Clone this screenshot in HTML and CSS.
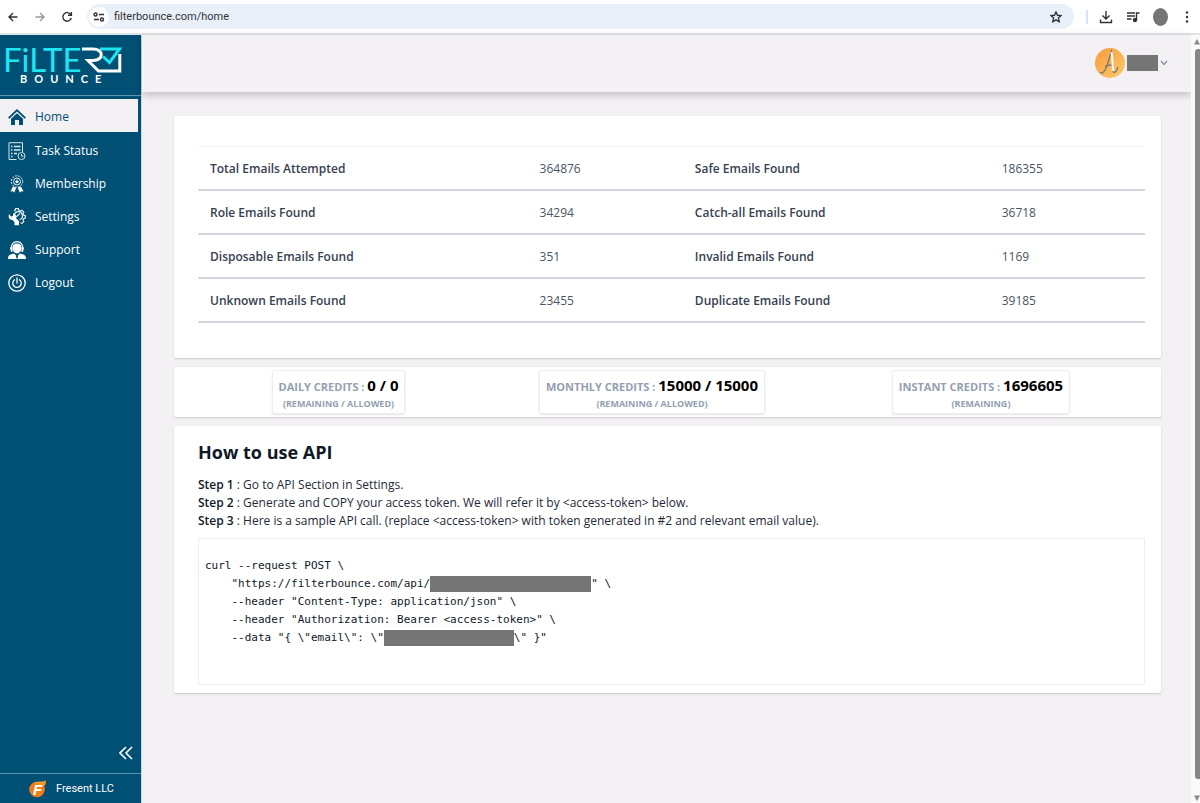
FILE: index.html
```
<!DOCTYPE html>
<html lang="en">
<head>
    <meta charset="utf-8">
    <meta name="viewport" content="width=device-width, initial-scale=1.0">
    <title>Filter Bounce</title>
    <link rel="stylesheet" href="styles.css">
</head>
<body>
<div class="window">
    <!-- browser bar -->
    <div class="browser">
        <button type="button" class="nav_btn" aria-label="Back"><svg width="10" height="10" viewBox="0 0 10 10"><path d="M9.5 5H1M5 1L1 5l4 4"/></svg></button>
        <button type="button" class="nav_btn off" aria-label="Forward"><svg width="10" height="10" viewBox="0 0 10 10"><path d="M.5 5H9M5 1l4 4-4 4"/></svg></button>
        <button type="button" class="nav_btn" aria-label="Reload"><svg width="12" height="12" viewBox="0 0 12 12"><path d="M9.8 3.6A4.3 4.3 0 1 0 10.300 7M10.400 1v3.300H7"/></svg></button>
        <div class="address">
            <span class="site_info"><svg width="12" height="10" viewBox="0 0 12 10"><circle cx="2.500" cy="2.500" r="1.500"/><path d="M6 2.500h5M1 7.500h5"/><circle cx="9" cy="7.500" r="1.500"/></svg></span>
            <input class="url" type="text" value="filterbounce.com/home" aria-label="Address">
            <button type="button" class="star" aria-label="Bookmark"><svg width="12" height="12" viewBox="0 0 12 12"><path d="M6 1l1.500 3.300 3.600.4-2.700 2.400.8 3.600L6 8.900l-3.200 1.800.8-3.600L.9 4.700l3.600-.4z"/></svg></button>
        </div>
        <span class="bar_line"></span>
        <button type="button" class="tool" aria-label="Downloads"><svg width="14" height="14" viewBox="0 0 14 14"><path d="M7 1v7.500M3.500 5.500L7 9l3.500-3.500M1.500 9.500v3h11v-3"/></svg></button>
        <button type="button" class="tool" aria-label="Media"><svg width="14" height="12" viewBox="0 0 14 12"><path d="M1 2h8M1 5h8M1 8h4.500M10.500 9V2h3"/><circle cx="9" cy="9" r="1.500" fill="#333"/></svg></button>
        <span class="profile"></span>
        <button type="button" class="tool dots" aria-label="Menu"><svg width="4" height="12" viewBox="0 0 4 12"><circle cx="2" cy="1.500" r="1.200"/><circle cx="2" cy="6" r="1.200"/><circle cx="2" cy="10.500" r="1.200"/></svg></button>
    </div>

    <div class="page">
        <!-- sidebar -->
        <aside class="sidebar">
            <a href="#" class="logo" aria-label="Filter Bounce">
                <svg width="120" height="46" viewBox="0 0 120 46">
                    <text class="logo_top" x="-2" y="28">FiLTE</text>
                    <path d="M77 5H88c11 0 11 11.500 0 11.500h-5L93.500 27h21.300V10" fill="none" stroke="#fff" stroke-width="3"/>
                    <path d="M95 5h19.500L104.500 18.500 98 12.500" fill="none" stroke="#1fe5f2" stroke-width="3"/>
                    <text class="logo_sub" x="15" y="39">BOUNCE</text>
                </svg>
            </a>
            <nav class="menu">
                <a href="#" class="item on">
                    <svg width="18" height="18" viewBox="0 0 18 18"><path d="M0 9.500L9 1l9 8.500-1.300 1.300L9 3.600l-7.700 7.200z" fill="#004f74"/><path d="M3 10.800l6-5.500 6 5.500V17h-4v-5H7v5H3z" fill="#004f74"/></svg>
                    Home</a>
                <a href="#" class="item">
                    <svg width="18" height="18" viewBox="0 0 18 18" fill="none" stroke="#d9e8ef"><path d="M8.500 17.500H1V.7h13.500V10"/><path d="M3 4.500h1.500M6 4.500h6.500M3 8h1.500M6 8h6.500M3 11.500h1.500M6 11.500h3M3 14.500h1.500" stroke-width="1.300"/><circle cx="13.500" cy="14" r="3.500"/><path d="M13.500 12v2.200h2"/></svg>
                    Task Status</a>
                <a href="#" class="item">
                    <svg width="18" height="18" viewBox="0 0 18 18" fill="none" stroke="#e6f0f5"><circle cx="9" cy="6.500" r="5.700" stroke-dasharray="2 1"/><circle cx="9" cy="6.500" r="3.500"/><path d="M9 4.300l.7 1.500 1.500.1-1.100 1 .4 1.500L9 7.700l-1.500.7.4-1.500-1.100-1 1.500-.1z" fill="#fff" stroke="none"/><path d="M5 11.500l-2.500 5 2.500-.3 1.200 1.500 2-5zM13 11.500l2.500 5-2.500-.3-1.200 1.500-2-5z" fill="#fff" stroke="none"/></svg>
                    Membership</a>
                <a href="#" class="item">
                    <svg width="18" height="18" viewBox="0 0 18 18" fill="none" stroke="#e6f0f5" stroke-width="1.200"><path d="M6 3l1-.5.6-1.800h2.800l.5 1.800 1.400.6 1.600-.9 1.900 2-.8 1.600.5 1.200 1.800.6v2.500l-1.800.6-.5 1.300.8 1.600-1.800 1.800-1.500-.7"/><path d="M6.500 8a4 4 0 1 1 5 3.500M8 9l4-3.500"/><path d="M1 6l2 2.500 2-.5V5.200c3 1 3.600 3 2.800 4.800l3.200 3v4.300H6.500v-3L4.500 12C1 12 0 9 1 6z" fill="#fff" stroke="none"/></svg>
                    Settings</a>
                <a href="#" class="item">
                    <svg width="18" height="18" viewBox="0 0 18 18"><path d="M3.200 8V6.500a5.800 5.800 0 0 1 11.600 0V8" fill="none" stroke="#fff" stroke-width="1.200"/><path d="M2 6.500h2.500V11H3zM13.500 6.500H16L15 11h-1.500z" fill="#fff"/><path d="M9 2.500c6 0 5 6 3 8.500-1.500 1.800-4.500 1.800-6 0-2-2.500-3-8.500 3-8.500z" fill="#fff"/><path d="M0 18c0-4 2-4.500 6-5.500l3 3 3-3c4 1 6 1.500 6 5.500z" fill="#fff"/><path d="M9 14.500l1.200 1.200L9 18l-1.200-2.300z" fill="#004f74"/></svg>
                    Support</a>
                <a href="#" class="item">
                    <svg width="18" height="18" viewBox="0 0 18 18" fill="none" stroke="#fff" stroke-width="1.300"><circle cx="9" cy="9" r="8.200"/><path d="M6.500 5.800a4.200 4.200 0 1 0 5 0M9 4v5" stroke-linecap="round"/></svg>
                    Logout</a>
            </nav>
            <button type="button" class="fold" aria-label="Collapse menu"><svg width="14" height="14" viewBox="0 0 14 14"><path d="M7 1L1 7l6 6M13 1L7 7l6 6" fill="none" stroke="#fff" stroke-width="1.600"/></svg></button>
            <a href="#" class="company">
                <svg width="18" height="18" viewBox="0 0 18 18"><circle cx="8" cy="9.500" r="7.800" fill="#ef7d1a"/><path d="M5 2.500C9 1 14 2 17 .5c0 4-1 5-3 6z" fill="#f6962c"/><text class="company_f" x="4" y="15">F</text></svg>
                Fresent LLC</a>
        </aside>

        <!-- contents -->
        <div class="contents">
            <header class="topbar">
                <button type="button" class="user" aria-label="Account">
                    <svg width="30" height="30" viewBox="0 0 30 30"><defs><linearGradient id="sun" x1="0" y1="0" x2="1" y2="1"><stop offset="0" stop-color="#f79a3e"/><stop offset="1" stop-color="#fdcb6a"/></linearGradient></defs><circle cx="15" cy="15" r="15" fill="url(#sun)"/><path d="M5 24c2 3 5-1 7-6 2-6 3-11 4.500-15 1.500 7 .5 15 1.500 20 .8 3 3.500 1 5-4M10 18.500c3-2 6-1.500 9-1" fill="none" stroke="#77727c" stroke-width="1.200"/><path d="M16.500 4c1.500 7 .5 14 2 19" fill="none" stroke="#fff" stroke-width="2"/></svg>
                    <span class="user_name"></span>
                    <svg width="8" height="6" viewBox="0 0 8 6"><path d="M1 1l3 3.500L7 1" fill="none" stroke="#7d8da3" stroke-width="1.200"/></svg>
                </button>
            </header>

            <main class="main">
                <section class="card stats">
                    <table class="tbl">
                        <tbody>
                            <tr><th>Total Emails Attempted</th><td>364876</td><th>Safe Emails Found</th><td>186355</td></tr>
                            <tr><th>Role Emails Found</th><td>34294</td><th>Catch-all Emails Found</th><td>36718</td></tr>
                            <tr><th>Disposable Emails Found</th><td>351</td><th>Invalid Emails Found</th><td>1169</td></tr>
                            <tr><th>Unknown Emails Found</th><td>23455</td><th>Duplicate Emails Found</th><td>39185</td></tr>
                        </tbody>
                    </table>
                </section>

                <section class="card credits">
                    <div class="cell">
                        <div class="credit"><p class="amount">DAILY CREDITS : <strong>0 / 0</strong></p><p class="note">(REMAINING / ALLOWED)</p></div>
                    </div>
                    <div class="cell">
                        <div class="credit"><p class="amount">MONTHLY CREDITS : <strong>15000 / 15000</strong></p><p class="note">(REMAINING / ALLOWED)</p></div>
                    </div>
                    <div class="cell">
                        <div class="credit"><p class="amount">INSTANT CREDITS : <strong>1696605</strong></p><p class="note">(REMAINING)</p></div>
                    </div>
                </section>

                <section class="card api">
                    <h2 class="tit">How to use API</h2>
                    <p class="step"><b>Step 1</b> : Go to API Section in Settings.</p>
                    <p class="step"><b>Step 2</b> : Generate and COPY your access token. We will refer it by &lt;access-token&gt; below.</p>
                    <p class="step"><b>Step 3</b> : Here is a sample API call. (replace &lt;access-token&gt; with token generated in #2 and relevant email value).</p>
                    <pre class="code">curl --request POST \
    "https://filterbounce.com/api/<span class="mask path"></span>" \
    --header "Content-Type: application/json" \
    --header "Authorization: Bearer &lt;access-token&gt;" \
    --data "{ \"email\": \"<span class="mask mail"></span>\" }"</pre>
                </section>
            </main>
        </div>

        <!-- scrollbar -->
        <div class="scroll">
            <svg width="6" height="6" viewBox="0 0 6 6"><path d="M0 5.500L3 0l3 5.500z" fill="#888"/></svg>
            <span class="thumb"></span>
            <svg width="6" height="6" viewBox="0 0 6 6"><path d="M0 .5L3 6 6 .5z" fill="#888"/></svg>
        </div>
    </div>
</div>
</body>
</html>
```
FILE: styles.css
```
*{padding: 0;margin: 0;box-sizing: border-box;}
body{font-family: "Open Sans", "Noto Sans", sans-serif;font-size: 12px;line-height: 18px;color: #1f2937;background-color: #f3f1f4;}
a{color: inherit;text-decoration: none;}
button{border: 0;background: none;font: inherit;color: inherit;display: flex;align-items: center;justify-content: center;}
svg{display: block;flex: none;}
.window{display: flex;flex-direction: column;height: 100vh;}

/* browser bar */
.browser{display: flex;align-items: center;height: 35px;padding: 0 8px 0 6px;background-color: #fff;border-bottom: 2px solid #e3e3e5;flex: none;}
.browser svg{fill: none;stroke: #333;stroke-width: 1.4;}
.nav_btn{width: 14px;height: 20px;margin-right: 13px;}
.nav_btn.off{opacity: .5;}
.address{display: flex;align-items: center;flex: 1;height: 25px;padding: 0 12px 0 2px;border-radius: 13px;background-color: #eaf0fa;}
.site_info{display: flex;align-items: center;justify-content: center;width: 20px;height: 20px;border-radius: 50%;background-color: #fff;}
.url{flex: 1;min-width: 0;margin-left: 5px;border: 0;background: none;font-family: Roboto, sans-serif;font-size: 11px;color: #333;outline: 0;}
.bar_line{width: 2px;height: 14px;margin: 0 11px 0 12px;background-color: #d3e3fd;}
.tool{width: 14px;height: 20px;margin-right: 13px;}
.profile{width: 15px;height: 18px;border-radius: 50%;background-color: #757575;}
.dots{width: 4px;margin: 0 3px 0 17px;}
.dots svg{fill: #333;stroke: none;}

/* layout */
.page{display: flex;flex: 1;min-height: 0;}
.contents{flex: 1;min-width: 0;display: flex;flex-direction: column;}

/* sidebar */
.sidebar{display: flex;flex-direction: column;width: 142px;background-color: #004f74;border-right: 1px solid #c9dbe5;color: #fff;flex: none;}
.logo{height: 61px;padding: 9px 5px 0;border-bottom: 1px solid #5e93ad;}
.logo svg{overflow: visible;}
.logo_top{font-family: Lato, sans-serif;font-size: 33px;fill: #1fe5f2;}
.logo_sub{font-family: Lato, sans-serif;font-size: 11px;font-weight: 700;letter-spacing: 7px;fill: #fff;}
.menu{display: flex;flex-direction: column;flex: 1;padding: 3px 3px 0 0;}
.item{display: flex;align-items: center;gap: 9px;height: 33px;padding: 2px 0 0 8px;font-size: 12px;font-weight: 500;}
.item.on{margin-bottom: 1px;background-color: #f3f1f4;color: #004f74;}
.fold{align-self: flex-end;width: 30px;height: 40px;}
.company{display: flex;align-items: center;gap: 9px;height: 30px;padding-left: 29px;border-top: 1px solid #5e93ad;font-family: Roboto, sans-serif;font-size: 11px;}
.company_f{font-family: "Liberation Sans", sans-serif;font-size: 15px;font-weight: bold;font-style: italic;fill: #fff;}

/* top */
.topbar{display: flex;align-items: center;justify-content: flex-end;height: 57px;padding: 0 23px 2px 0;background-color: #f3f1f4;box-shadow: 0 3px 8px rgba(0,0,0,.22);flex: none;}
.user{gap: 2px;}
.user_name{width: 31px;height: 16px;background-color: #757575;}

/* cards */
.main{display: flex;flex-direction: column;gap: 9px;padding: 24px 30px 24px 32px;}
.card{background-color: #fff;border-radius: 2px;box-shadow: 0 1px 2px rgba(0,0,0,.16);}
.stats{padding: 30px 16px 35px 24px;}
.tbl{width: 100%;table-layout: fixed;border-spacing: 0;border-top: 1px solid #f3f3f5;}
.tbl th, .tbl td{height: 44px;padding: 1px 12px 0;border-bottom: 2px solid #d0d6dd;text-align: left;color: #4b5563;font-weight: 400;}
.tbl th{width: 34.8%;color: #374151;font-weight: 600;}
.tbl th:nth-child(3){width: 32.4%;}

.credits{display: grid;grid-template-columns: 329fr 298fr 360fr;padding: 3px 0;}
.cell{display: flex;justify-content: center;}
.credit{height: 44px;padding: 4px 6px 0;border: 1px solid #ededf0;border-radius: 3px;box-shadow: 0 1px 2px rgba(0,0,0,.1);text-align: center;font-weight: 700;color: #94a0b0;}
.amount{font-size: 11px;line-height: 20px;}
.amount strong{font-size: 15px;font-weight: 700;color: #000;}
.note{font-size: 9px;line-height: 14px;}

.api{padding: 16px 16px 8px 24px;}
.tit{margin-bottom: 14px;font-size: 18px;line-height: 20px;font-weight: 700;color: #111827;}
.step b{font-weight: 600;color: #111827;}
.code{height: 147px;margin-top: 8px;padding: 18px 6px;border: 1px solid #eeeef1;font-family: "DejaVu Sans Mono", monospace;font-size: 11px;line-height: 18px;color: #111827;}
.mask{display: inline-block;height: 16px;vertical-align: middle;background-color: #757575;}
.mask.path{width: 161px;}
.mask.mail{width: 130px;}

/* scrollbar */
.scroll{display: flex;flex-direction: column;align-items: flex-end;gap: 4px;width: 9px;padding: 4px 0 2px;background-color: #fafafa;flex: none;}
.thumb{flex: 1;width: 5px;margin-bottom: 12px;border-radius: 3px 0 0 3px;background-color: #868686;}
```
